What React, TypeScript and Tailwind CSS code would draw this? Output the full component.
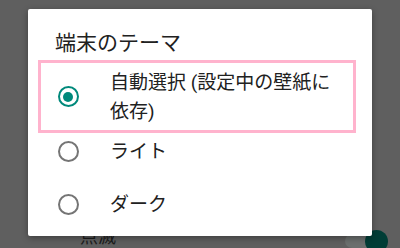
import React from 'react';

type Option = { label: string; checked?: boolean };

const options: Option[] = [
  { label: '自動選択 (設定中の壁紙に依存)', checked: true },
  { label: 'ライト' },
  { label: 'ダーク' },
];

function Radio({ checked }: { checked?: boolean }) {
  return (
    <span
      className={
        checked
          ? 'flex h-[21px] w-[21px] shrink-0 items-center justify-center rounded-full border-[2.5px] border-[#00897b]'
          : 'flex h-[21px] w-[21px] shrink-0 items-center justify-center rounded-full border-[2.5px] border-[#757575]'
      }
    >
      {checked && <span className="h-[10px] w-[10px] rounded-full bg-[#00897b]" />}
    </span>
  );
}

export default function App() {
  return (
    <div
      className="relative h-[248px] w-[400px] overflow-hidden bg-[#5f5f5f]"
      style={{ fontFamily: 'Roboto, "Noto Sans CJK JP", sans-serif' }}
    >
      {/* settings page behind the dim */}
      <div className="mt-[222px] flex h-[30px] items-center pl-[80px] pr-[21px]">
        <span className="flex-1 text-[18px] leading-[24px] text-[#1c1c1c]">点滅</span>
        <span className="relative flex h-[14px] w-[34px] items-center rounded-full bg-[#6b6f6e] mt-[8px]">
          <span className="absolute right-[-9px] h-[23px] w-[23px] rounded-full bg-[#003d36]" />
        </span>
      </div>

      {/* dialog */}
      <div className="absolute left-[28px] top-[9px] h-[227px] w-[344px] rounded-[2px] bg-white shadow-[0_2px_6px_rgba(0,0,0,0.35)]">
        <h2 className="pl-[27px] pt-[19px] text-[21px] leading-[30px] font-normal text-[#212121]">
          端末のテーマ
        </h2>

        <div className="ml-[10px] mr-[16px] mt-[2px] flex h-[73px] items-center border-[3px] border-[#ffb3cd] pl-[16.5px] pr-[8px]">
          <Radio checked={options[0].checked} />
          <span className="ml-[31.5px] text-[19px] leading-[29px] text-[#212121]">
            {options[0].label}
          </span>
        </div>

        <div className="flex h-[36px] items-center pl-[29.5px]">
          <Radio />
          <span className="ml-[31.5px] text-[19px] leading-[29px] text-[#212121]">
            {options[1].label}
          </span>
        </div>

        <div className="mt-[17px] flex h-[36px] items-center pl-[29.5px]">
          <Radio />
          <span className="ml-[31.5px] text-[19px] leading-[29px] text-[#212121]">
            {options[2].label}
          </span>
        </div>
      </div>
    </div>
  );
}
